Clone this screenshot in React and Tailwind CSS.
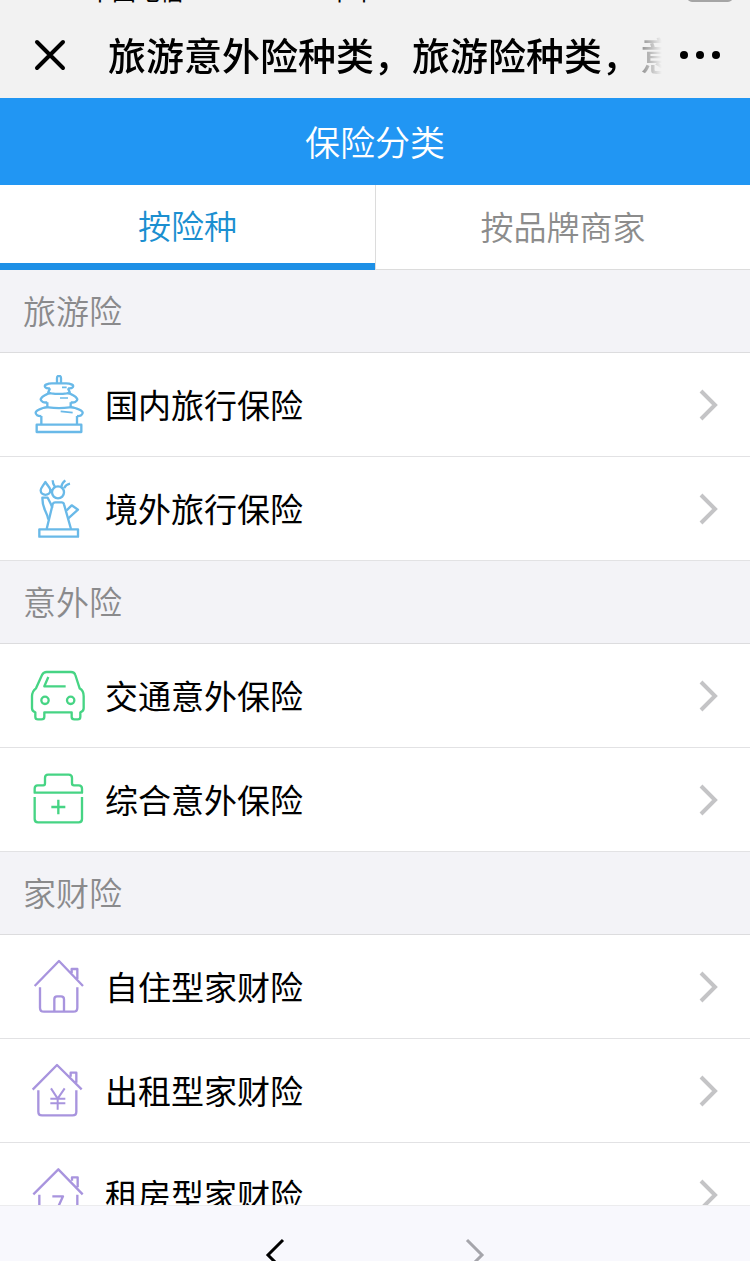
import React, { useState } from 'react';

const IconSvg = ({ viewBox, color, children }) => (
  <svg
    viewBox={viewBox}
    className={`h-15 w-15 shrink-0 ${color}`}
    fill="none"
    stroke="currentColor"
    strokeWidth="7"
    strokeLinejoin="round"
    aria-hidden="true"
  >
    {children}
  </svg>
);

const TempleIcon = () => (
  <IconSvg viewBox="27 45 180 180" color="text-[#69b9e8]">
    <path d="M111 70V55c0-10 12-10 12 0v15" />
    <path d="M90 85c-14 2-20-7-12-11 4-2 10-4 18-4h42c8 0 14 2 18 4 8 4 2 13-12 11" />
    <path d="M90 85l-6 14M144 85l6 14" />
    <path d="M82 127c-10 2-20-2-20-9 2-8 10-11 18-15 4-3 8-4 14-3 14 2 32 2 46 0 6-1 10 0 14 3 8 4 16 7 18 15 0 7-10 11-20 9" />
    <path d="M82 127v14M152 127v14" />
    <path d="M64 168c-10 1-18-4-17-11 3-8 14-10 22-13 6-2 10-3 16-2 20 3 44 3 64 0 6-1 10 0 16 2 8 3 20 5 23 13 1 7-7 12-17 11" />
    <path d="M64 168v26M171 168v26" />
    <path d="M126 82h14M120 114h24M122 154l36 4" strokeWidth="5" />
    <path d="M50 194h134v22H50z" />
  </IconSvg>
);

const LibertyIcon = () => (
  <IconSvg viewBox="27 42 180 180" color="text-[#69b9e8]">
    <path d="M76 51c8 12 15 18 15 25 0 18-29 18-29 0 0-7 7-13 14-25z" />
    <circle cx="114" cy="82" r="18" />
    <path d="M98 46c0 8 2 14 7 20M90 74l8 4M136 46c-8 6-11 12-12 20M150 56c-10 2-14 6-18 14" />
    <path d="M80 192l18-74c1-4 4-6 8-6h19c4 0 6 2 7 6l21 74" />
    <path d="M85 164c-2-12-5-18-9-26-6-12-9-22-9-40h16c6 12 12 22 14 30" />
    <path d="M140 136l15-15 19 13-30 27" />
    <path d="M58 193h116v22H58z" />
  </IconSvg>
);

const CarIcon = () => (
  <IconSvg viewBox="27 33 180 180" color="text-[#46d484]">
    <path d="M73 172h82v14c0 5 4 7 8 7h10c6 0 8-3 8-8v-13c6-2 10-6 10-12v-36c0-12-4-20-12-24l-13-40c-2-7-6-9-13-9H80c-8 0-11 3-14 9L48 100c-8 6-12 12-12 24v36c0 6 4 10 10 12v13c0 5 3 8 8 8h10c6 0 9-3 9-8z" />
    <circle cx="75" cy="136" r="11" />
    <circle cx="152" cy="136" r="11" />
    <path d="M85 66l-12 28h64" />
  </IconSvg>
);

const MedicalIcon = () => (
  <IconSvg viewBox="27 30 180 180" color="text-[#46d484]">
    <path d="M44 98V86c0-7 3-10 9-10h17c4 0 5-2 5-6V54c0-7 3-10 9-10h62c7 0 10 3 10 10v16c0 4 2 6 6 6h14c7 0 10 3 10 10v12z" />
    <path d="M44 111v66c0 7 3 10 10 10h122c7 0 10-3 10-10v-66" />
    <path d="M115 119v44M94 141h42" />
  </IconSvg>
);

const HouseIcon = () => (
  <IconSvg viewBox="27 36 180 180" color="text-[#a894de]">
    <path d="M44 123l73-75 72 75M155 84V72h17v30" />
    <path d="M60 127v61c0 8 4 12 12 12h88c8 0 12-4 12-12v-61" />
    <path d="M103 199v-36c0-6 3-9 8-9h12c6 0 9 3 9 9v36" />
  </IconSvg>
);

const RentOutIcon = () => (
  <IconSvg viewBox="27 33 180 180" color="text-[#a894de]">
    <path d="M38 119l73-74 74 73M152 80V68h17v30" />
    <path d="M55 121v64c0 7 4 11 11 11h92c7 0 11-4 11-11v-64" />
    <path d="M93 115l20 31 21-31M113 146v33M91 146h45M91 160h45" strokeWidth="6" />
  </IconSvg>
);

const TenantIcon = () => (
  <IconSvg viewBox="27 45 180 180" color="text-[#a894de]">
    <path d="M40 133l75-75 73 75M156 92V82h17v30" />
    <path d="M58 134v64c0 7 4 11 11 11h92c7 0 11-4 11-11v-64" />
    <path d="M97 139h32l-22 48" />
  </IconSvg>
);

const sections = [
  {
    title: '旅游险',
    items: [
      { name: '国内旅行保险', Icon: TempleIcon },
      { name: '境外旅行保险', Icon: LibertyIcon },
    ],
  },
  {
    title: '意外险',
    items: [
      { name: '交通意外保险', Icon: CarIcon },
      { name: '综合意外保险', Icon: MedicalIcon },
    ],
  },
  {
    title: '家财险',
    items: [
      { name: '自住型家财险', Icon: HouseIcon },
      { name: '出租型家财险', Icon: RentOutIcon },
      { name: '租房型家财险', Icon: TenantIcon },
    ],
  },
];

const tabs = ['按险种', '按品牌商家'];

const StatusBar = () => (
  <div className="flex h-1 items-end overflow-hidden pr-4 pl-22 text-2xl leading-7 text-black">
    <span>中国电信</span>
    <span className="ml-36">下午4:30</span>
    <svg viewBox="0 0 48 24" className="ml-auto h-6 w-12 shrink-0" aria-hidden="true">
      <rect x="2" y="1" width="44" height="20" rx="4" fill="none" stroke="#a5a5a5" strokeWidth="2" />
    </svg>
  </div>
);

const TitleBar = () => (
  <div className="flex h-[94px] items-center pt-2 pr-7 pl-8 text-black">
    <button aria-label="关闭" className="shrink-0">
      <svg viewBox="0 0 36 36" className="size-9" fill="none" stroke="currentColor" strokeWidth="4" strokeLinecap="round">
        <path d="M5 5l26 26M31 5L5 31" />
      </svg>
    </button>
    <h1 className="ml-10 min-w-0 flex-1 overflow-hidden pb-1 text-[38px] font-medium whitespace-nowrap [mask-image:linear-gradient(to_right,#000_calc(100%-44px),rgba(0,0,0,0.5)_calc(100%-26px),transparent)]">
      旅游意外险种类，旅游险种类，意外险
    </h1>
    <button aria-label="更多" className="ml-4 shrink-0">
      <svg viewBox="0 0 44 12" className="h-3 w-11" fill="currentColor">
        <circle cx="6" cy="6" r="4" />
        <circle cx="22" cy="6" r="4" />
        <circle cx="38" cy="6" r="4" />
      </svg>
    </button>
  </div>
);

const CategoryRow = ({ name, Icon }) => (
  <li>
    <a href="#" className="flex h-26 items-center border-b border-[#e2e2e4] bg-white pr-8 pl-[29px]">
      <Icon />
      <span className="ml-4 flex-1 text-[33px] text-black">{name}</span>
      <svg viewBox="0 0 20 32" className="h-8 w-5 shrink-0" fill="none" stroke="#c4c4c6" strokeWidth="4" aria-hidden="true">
        <path d="M3 2l14 14L3 30" />
      </svg>
    </a>
  </li>
);

const App = () => {
  const [activeTab, setActiveTab] = useState(0);

  return (
    <div className="flex h-screen flex-col overflow-hidden bg-[#f2f2f2] font-['Noto_Sans_CJK_SC',sans-serif]">
      <header className="shrink-0">
        <StatusBar />
        <TitleBar />
      </header>

      <main className="min-h-0 flex-1 overflow-hidden bg-white">
        <h2 className="flex h-[87px] items-center justify-center bg-[#2196f3] text-[35px] font-[350] text-white">
          保险分类
        </h2>

        <div role="tablist" className="grid h-[85px] grid-cols-2">
          {tabs.map((tab, index) => (
            <button
              key={tab}
              role="tab"
              aria-selected={activeTab === index}
              onClick={() => setActiveTab(index)}
              className={
                activeTab === index
                  ? 'border-b-[7px] border-[#1e90e6] pt-1 text-[33px] font-[350] text-[#1b8fd0]'
                  : 'border-b border-l border-[#dcdcdc] text-[33px] font-[350] text-[#8c8c8c]'
              }
            >
              {tab}
            </button>
          ))}
        </div>

        {sections.map((section) => (
          <section key={section.title}>
            <h3 className="flex h-[83px] items-center border-b border-[#dcdcde] bg-[#f3f3f7] px-[23px] text-[33px] font-[350] text-[#8a8a8c]">
              {section.title}
            </h3>
            <ul>
              {section.items.map((item) => (
                <CategoryRow key={item.name} name={item.name} Icon={item.Icon} />
              ))}
            </ul>
          </section>
        ))}
      </main>

      <nav className="flex h-14 shrink-0 items-start justify-center gap-45 overflow-hidden border-t border-[#ececee] bg-[#f8f8fd] pt-8">
        <button aria-label="后退">
          <svg viewBox="0 0 20 34" className="h-[34px] w-5" fill="none" stroke="#000" strokeWidth="3">
            <path d="M18 2L3 17l15 15" />
          </svg>
        </button>
        <button aria-label="前进">
          <svg viewBox="0 0 20 34" className="h-[34px] w-5" fill="none" stroke="#a5a5ab" strokeWidth="3">
            <path d="M2 2l15 15L2 32" />
          </svg>
        </button>
      </nav>
    </div>
  );
};

export default App;
